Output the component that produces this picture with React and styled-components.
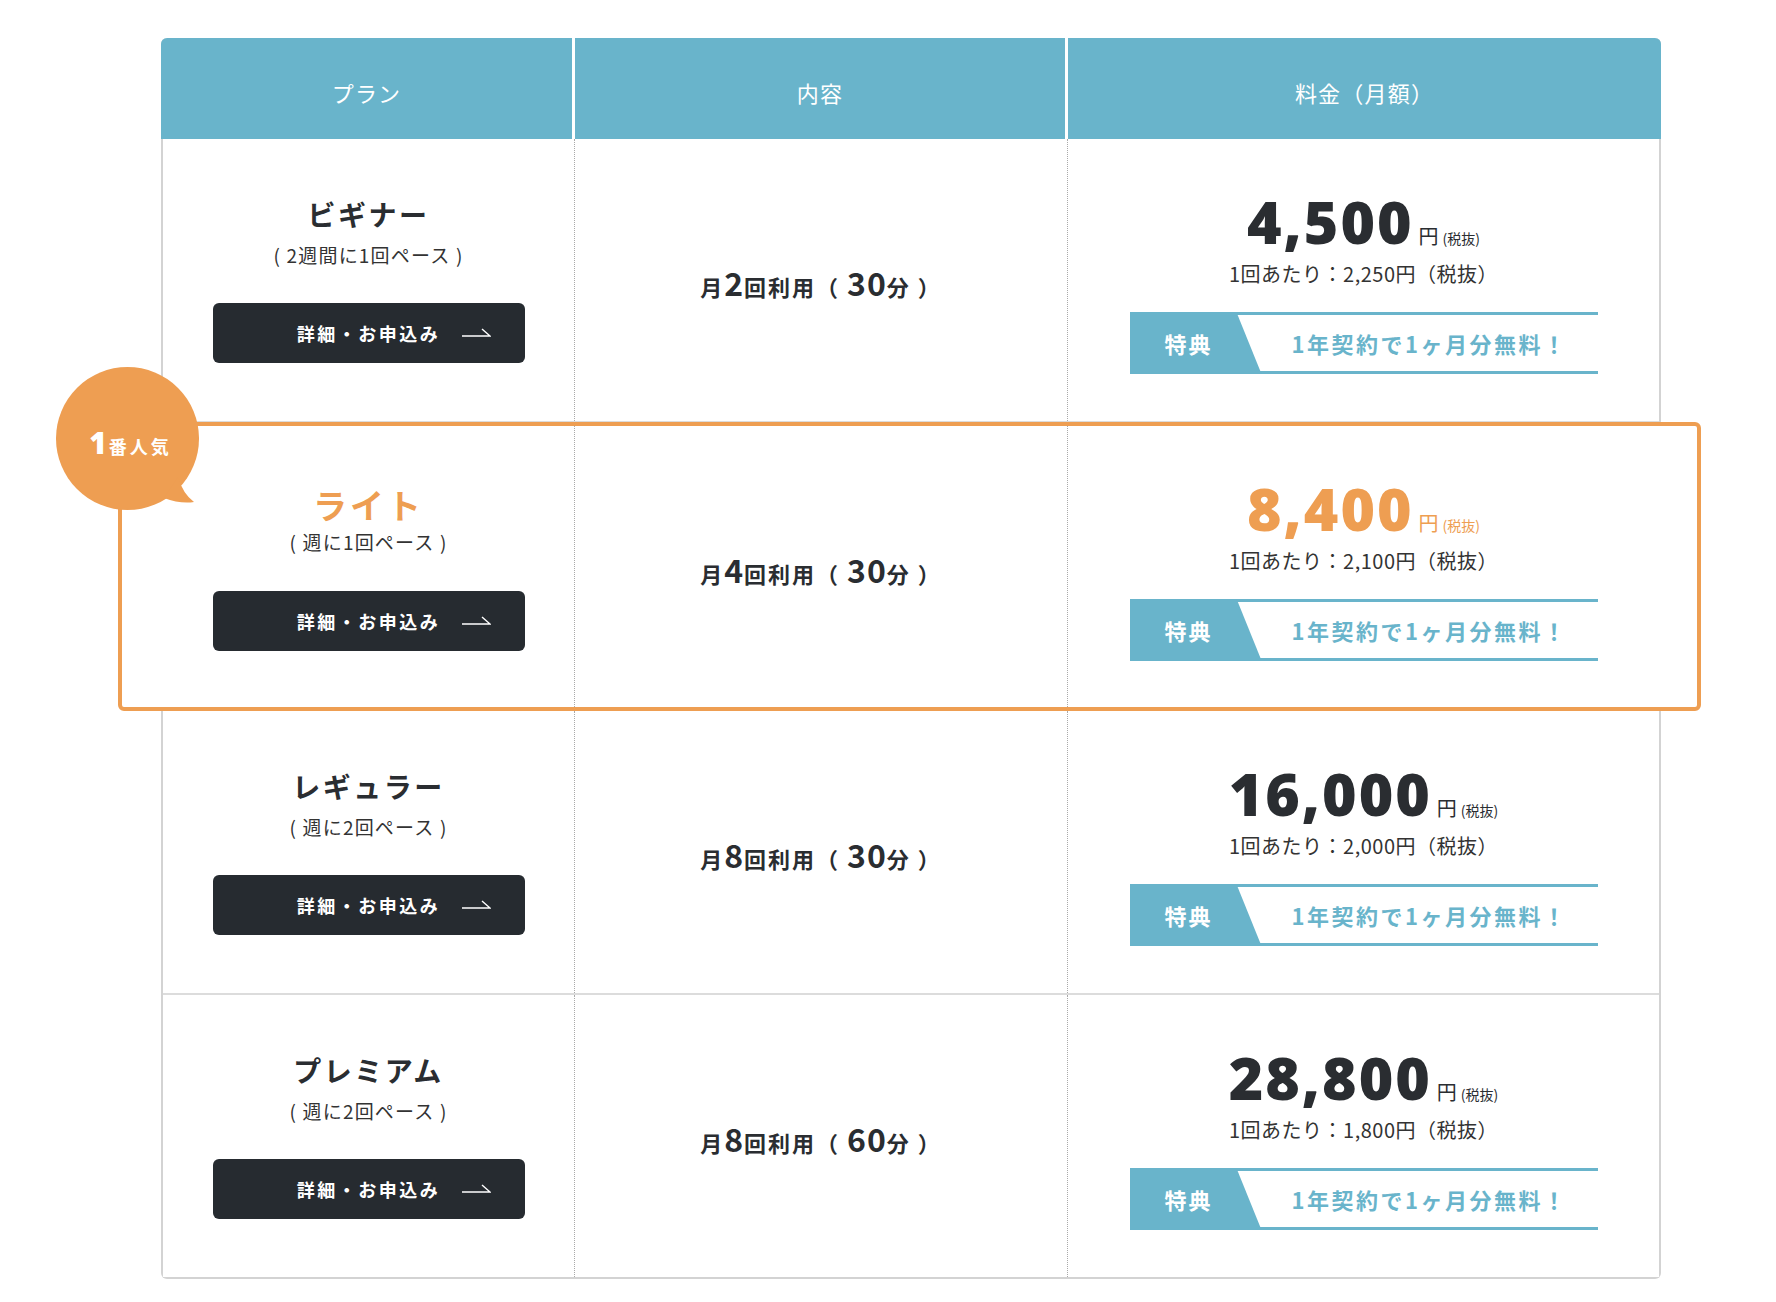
import React from "react";
import styled, { createGlobalStyle } from "styled-components";

const BLUE = "#69b4cb";
const ORANGE = "#ee9e52";
const INK = "#2a2d31";

const plans = [
  { name: "ビギナー", pace: "( 2週間に1回ペース )", count: "2", minutes: "30", price: "4,500", per: "2,250" },
  { name: "ライト", pace: "( 週に1回ペース )", count: "4", minutes: "30", price: "8,400", per: "2,100", featured: true },
  { name: "レギュラー", pace: "( 週に2回ペース )", count: "8", minutes: "30", price: "16,000", per: "2,000" },
  { name: "プレミアム", pace: "( 週に2回ペース )", count: "8", minutes: "60", price: "28,800", per: "1,800" },
];

const GlobalStyle = createGlobalStyle`
  body {
    margin: 0;
    background: #fff;
    font-family: "Noto Sans CJK JP", "Noto Sans", sans-serif;
    color: ${INK};
    text-spacing-trim: space-all;
  }
`;

const Page = styled.div`
  padding: 38px 0 40px 161px;
`;

const Table = styled.div`
  width: 1500px;
  box-sizing: border-box;
  border: 2px solid #d3d3d3;
  border-top: 0;
  border-radius: 6px;
`;

const cols = "411px 493px 1fr";

const Head = styled.div`
  display: grid;
  grid-template-columns: ${cols};
  height: 101px;
  margin: 0 -2px;
  overflow: hidden;
  border-radius: 6px 6px 0 0;
`;

const HeadCell = styled.div`
  display: flex;
  align-items: center;
  justify-content: center;
  background: ${BLUE};
  color: #fff;
  font-size: 22px;
  letter-spacing: 1.2px;
  padding-top: 7px;
  & + & {
    border-left: 3px solid #fff;
  }
`;

const Row = styled.div`
  position: relative;
  display: grid;
  grid-template-columns: ${cols};
  height: 282px;
  border-bottom: 2px solid #dcdcdc;
  background: #fff;
  &:last-child {
    border-bottom: 0;
  }
`;

const FeaturedRow = styled(Row)`
  height: 281px;
  margin: -1px -42px 0 -45px;
  padding: 0 38px 0 41px;
  border: 4px solid ${ORANGE};
  border-radius: 6px;
  z-index: 1;
`;

const Cell = styled.div`
  display: flex;
  flex-direction: column;
  align-items: center;
  justify-content: center;
  & + & {
    border-left: 1px dotted #a9a9a9;
  }
`;

const PlanName = styled.div`
  font-size: ${(p) => (p.$featured ? "34px" : "28px")};
  font-weight: 700;
  letter-spacing: ${(p) => (p.$featured ? "3px" : "2.5px")};
  line-height: ${(p) => (p.$featured ? "1.15" : "1.4")};
  margin: ${(p) => (p.$featured ? "3px 0 -3px" : "-2px 0 0")};
  color: ${(p) => (p.$featured ? ORANGE : INK)};
`;

const Pace = styled.div`
  font-size: 19px;
  line-height: 1.5;
  letter-spacing: 1.2px;
  margin-top: 7px;
  color: #333;
`;

const DetailButton = styled.a`
  position: relative;
  display: flex;
  align-items: center;
  justify-content: center;
  width: 312px;
  height: 60px;
  margin-top: 34px;
  border-radius: 6px;
  background: #262b30;
  color: #fff;
  font-size: 18px;
  font-weight: 700;
  letter-spacing: 2.5px;
  text-decoration: none;
  cursor: pointer;
`;

const Arrow = styled.svg`
  position: absolute;
  right: 34px;
  top: 24px;
`;

const Usage = styled.div`
  display: flex;
  align-items: baseline;
  font-size: 22px;
  font-weight: 700;
  letter-spacing: 2px;
  color: ${INK};
  padding-top: 4px;
  white-space: pre;
`;

const Num = styled.span`
  font-size: 32px;
  letter-spacing: 1px;
`;

const Price = styled.div`
  display: flex;
  align-items: baseline;
  color: ${(p) => (p.$featured ? ORANGE : INK)};
  line-height: 1;
  margin-top: 6px;
`;

const Amount = styled.span`
  font-family: "Open Sans", Lato, sans-serif;
  font-weight: 800;
  font-size: 59px;
  letter-spacing: 2px;
`;

const Yen = styled.span`
  font-size: 20px;
  margin-left: 5px;
`;

const Tax = styled.span`
  font-size: 14px;
  margin-left: 4px;
`;

const PerTime = styled.div`
  font-size: 20px;
  line-height: 1.5;
  letter-spacing: 0.5px;
  margin-top: 8px;
  color: #333;
`;

const Perk = styled.div`
  display: flex;
  width: 468px;
  height: 56px;
  margin-top: 23px;
  border-top: 3px solid ${BLUE};
  border-bottom: 3px solid ${BLUE};
`;

const PerkLabel = styled.div`
  display: flex;
  align-items: center;
  justify-content: center;
  width: 132px;
  box-sizing: border-box;
  margin: -3px 0;
  padding-right: 14px;
  background: ${BLUE};
  clip-path: polygon(0 0, 81% 0, 100% 100%, 0 100%);
  color: #fff;
  font-size: 22px;
  font-weight: 700;
  letter-spacing: 2px;
`;

const PerkText = styled.div`
  flex: 1;
  display: flex;
  align-items: center;
  justify-content: center;
  color: ${BLUE};
  font-size: 22px;
  font-weight: 700;
  letter-spacing: 2.5px;
`;

const Badge = styled.div`
  position: absolute;
  left: -66px;
  top: -59px;
  width: 145px;
  height: 145px;
  display: flex;
  align-items: center;
  justify-content: center;
  padding: 6px 0 0 4px;
  box-sizing: border-box;
  z-index: 2;
  svg {
    position: absolute;
    inset: 0;
  }
`;

const BadgeText = styled.div`
  position: relative;
  display: flex;
  align-items: baseline;
  color: #fff;
  font-weight: 700;
  font-size: 18px;
  letter-spacing: 3px;
  span {
    font-family: "Open Sans", Lato, sans-serif;
    font-weight: 800;
    font-size: 30px;
    letter-spacing: 2px;
  }
`;

const PlanRow = ({ plan }) => {
  const R = plan.featured ? FeaturedRow : Row;
  return (
    <R>
      {plan.featured && (
        <Badge>
          <svg width="145" height="145" viewBox="0 0 145 145">
            <circle cx="71.5" cy="71.5" r="71.5" fill={ORANGE} />
            <path d="M122 110 Q127 127 138 135 Q124 137 108 131 Z" fill={ORANGE} />
          </svg>
          <BadgeText>
            <span>1</span>番人気
          </BadgeText>
        </Badge>
      )}
      <Cell>
        <PlanName $featured={plan.featured}>{plan.name}</PlanName>
        <Pace>{plan.pace}</Pace>
        <DetailButton>
          詳細・お申込み
          <Arrow width="29" height="10" viewBox="0 0 29 10">
            <path d="M0 9 H28 L20 2" fill="none" stroke="#fff" strokeWidth="1.4" />
          </Arrow>
        </DetailButton>
      </Cell>
      <Cell>
        <Usage>
          月<Num>{plan.count}</Num>回利用（ <Num>{plan.minutes}</Num>分 ）
        </Usage>
      </Cell>
      <Cell>
        <Price $featured={plan.featured}>
          <Amount>{plan.price}</Amount>
          <Yen>円</Yen>
          <Tax>(税抜)</Tax>
        </Price>
        <PerTime>1回あたり：{plan.per}円（税抜）</PerTime>
        <Perk>
          <PerkLabel>特典</PerkLabel>
          <PerkText>1年契約で1ヶ月分無料！</PerkText>
        </Perk>
      </Cell>
    </R>
  );
};

export default function App() {
  return (
    <Page>
      <GlobalStyle />
      <Table>
        <Head>
          <HeadCell>プラン</HeadCell>
          <HeadCell>内容</HeadCell>
          <HeadCell>料金（月額）</HeadCell>
        </Head>
        {plans.map((p) => (
          <PlanRow key={p.name} plan={p} />
        ))}
      </Table>
    </Page>
  );
}
